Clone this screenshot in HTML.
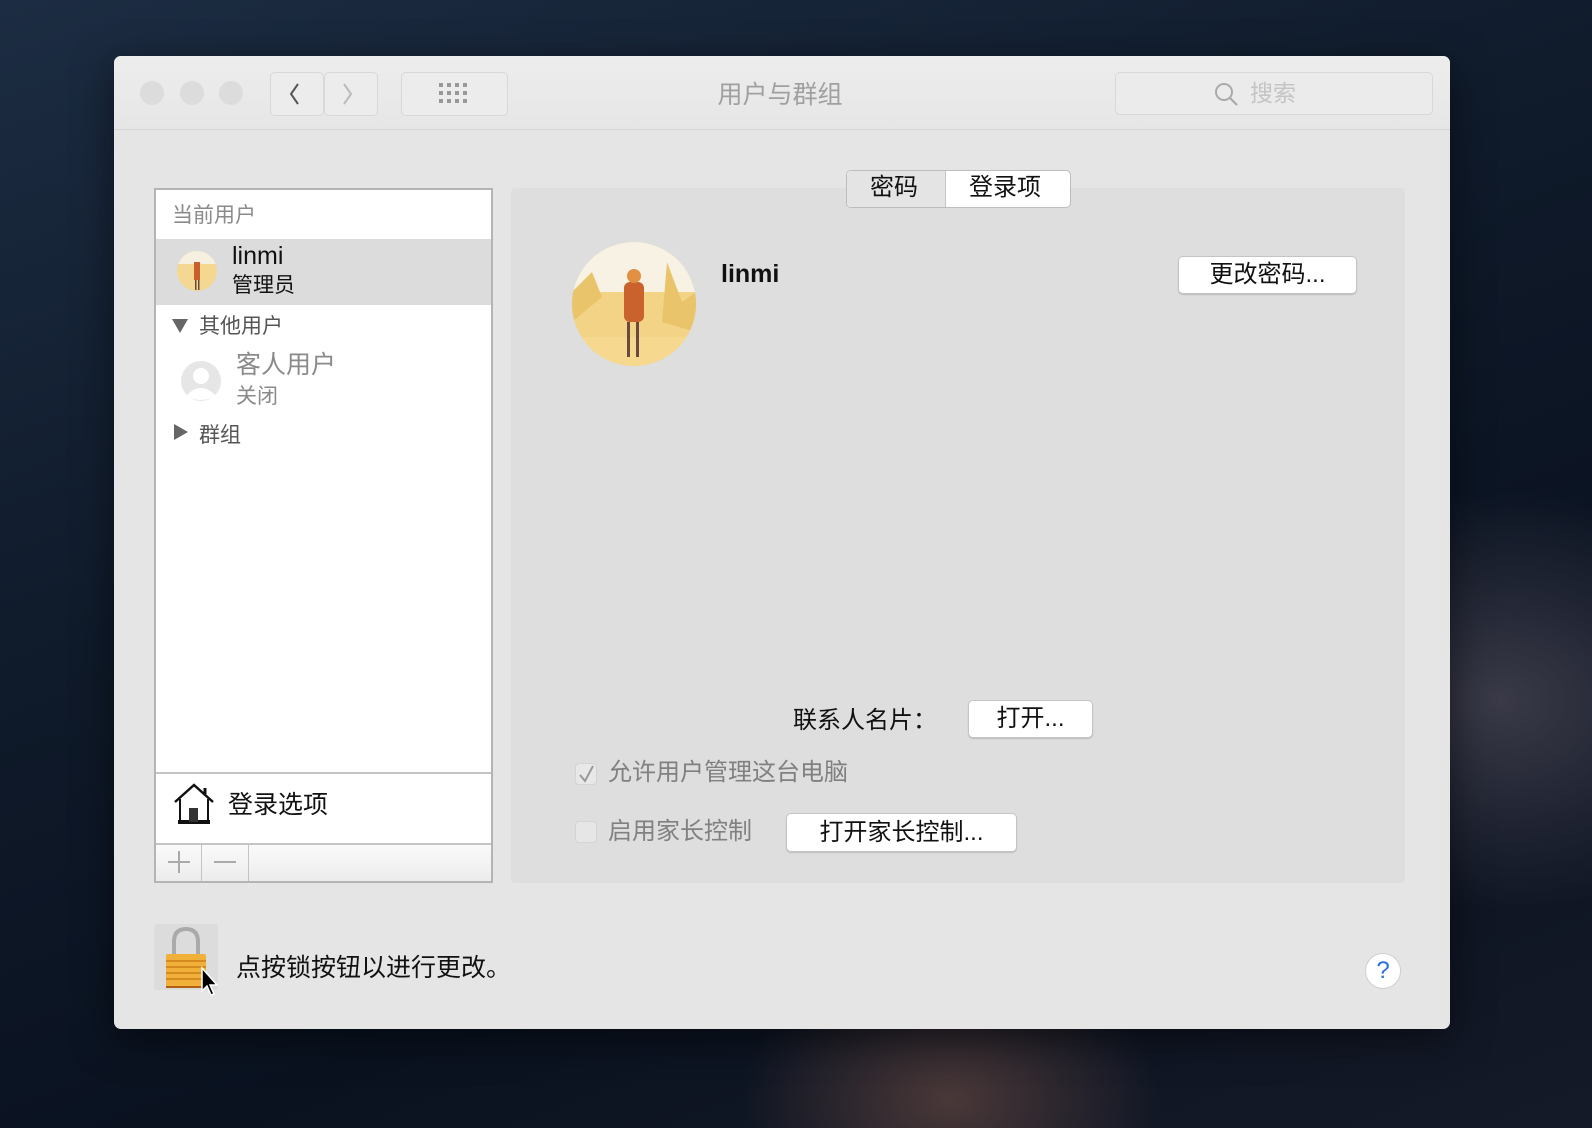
<!DOCTYPE html>
<html><head><meta charset="utf-8"><style>
*{margin:0;padding:0;box-sizing:border-box}
body{width:1592px;height:1128px;overflow:hidden;position:relative;font-family:"Liberation Sans","Noto Sans CJK SC",sans-serif;
background:radial-gradient(ellipse 400px 300px at 1500px 700px,#3a3a48 0%,transparent 70%),radial-gradient(ellipse 300px 200px at 950px 1100px,#4a3838 0%,transparent 70%),linear-gradient(160deg,#1c2c42 0%,#0f1a2a 40%,#0a1220 70%,#151a28 100%)}
.abs{position:absolute}
.win{left:114px;top:56px;width:1336px;height:973px;background:#e5e5e5;border-radius:7px;overflow:hidden;box-shadow:0 10px 40px rgba(0,0,0,.5)}
.tb{left:0;top:0;width:1336px;height:74px;background:linear-gradient(#ededed,#e6e6e6);border-bottom:1px solid #d6d6d6}
.dot{width:24px;height:24px;border-radius:50%;background:#dcdcdc;top:25px}
.btn0{border:1px solid #d8d8d8;border-radius:5px;background:#ececec}
.txt{white-space:nowrap;line-height:1}
.side{left:40px;top:132px;width:339px;height:695px;background:#fff;border:2px solid #b4b4b4}
.pane{left:397px;top:132px;width:894px;height:695px;background:#dedede;border-radius:4px}
.wbtn{background:#fff;border:1px solid #c4c4c4;border-radius:5px;box-shadow:0 1px 1px rgba(0,0,0,.15);text-align:center;color:#111;font-size:24px}
</style></head><body>
<div class="abs win">
 <div class="abs tb">
  <div class="abs dot" style="left:26px"></div><div class="abs dot" style="left:66px"></div><div class="abs dot" style="left:105px"></div>
  <div class="abs btn0" style="left:156px;top:16px;width:54px;height:44px"></div>
  <div class="abs btn0" style="left:210px;top:16px;width:54px;height:44px"></div>
  <svg class="abs" style="left:168px;top:24px" width="90" height="30"><path d="M16 4 L9 14 L16 24" stroke="#555" stroke-width="2" fill="none"/><path d="M62 4 L69 14 L62 24" stroke="#bbb" stroke-width="2" fill="none"/></svg>
  <div class="abs btn0" style="left:287px;top:16px;width:107px;height:44px"></div>
  <svg class="abs" style="left:325px;top:27px" width="32" height="24"><g fill="#999"><rect x="0" y="0" width="4" height="4"/><rect x="8" y="0" width="4" height="4"/><rect x="16" y="0" width="4" height="4"/><rect x="24" y="0" width="4" height="4"/><rect x="0" y="8" width="4" height="4"/><rect x="8" y="8" width="4" height="4"/><rect x="16" y="8" width="4" height="4"/><rect x="24" y="8" width="4" height="4"/><rect x="0" y="16" width="4" height="4"/><rect x="8" y="16" width="4" height="4"/><rect x="16" y="16" width="4" height="4"/><rect x="24" y="16" width="4" height="4"/></g></svg>
  <div class="abs txt" style="left:596px;top:27px;width:140px;text-align:center;font-size:25px;color:#a0a0a0">用户与群组</div>
  <div class="abs btn0" style="left:1001px;top:16px;width:318px;height:43px;background:#ebebeb"></div>
  <svg class="abs" style="left:1099px;top:25px" width="26" height="26"><circle cx="11" cy="11" r="8" stroke="#aaa" stroke-width="2" fill="none"/><path d="M17 17 L24 24" stroke="#aaa" stroke-width="2.2"/></svg>
  <div class="abs txt" style="left:1136px;top:26px;font-size:23px;color:#c4c4c4">搜索</div>
 </div>
 <div class="abs side">
  <div class="abs txt" style="left:16px;top:15px;font-size:21px;color:#8a8a8a">当前用户</div>
  <div class="abs" style="left:0;top:49px;width:335px;height:66px;background:#dcdcdc"></div>
  <svg class="abs" style="left:20px;top:60px" width="42" height="42"><defs><clipPath id="c1"><circle cx="21" cy="21" r="20"/></clipPath></defs><g clip-path="url(#c1)"><rect width="42" height="42" fill="#f4d790"/><rect width="42" height="14" fill="#f6f0e0"/><rect x="18" y="12" width="6" height="18" fill="#c8602c"/><rect x="19" y="30" width="1.5" height="10" fill="#6a4a3a"/><rect x="22" y="30" width="1.5" height="10" fill="#6a4a3a"/></g></svg>
  <div class="abs txt" style="left:76px;top:54px;font-size:25px;color:#111">linmi</div>
  <div class="abs txt" style="left:76px;top:85px;font-size:21px;color:#111">管理员</div>
  <svg class="abs" style="left:15px;top:128px" width="18" height="16"><path d="M1 1 L17 1 L9 15Z" fill="#666"/></svg>
  <div class="abs txt" style="left:43px;top:126px;font-size:21px;color:#555">其他用户</div>
  <svg class="abs" style="left:24px;top:170px" width="42" height="42"><circle cx="21" cy="21" r="20" fill="#e6e6e6"/><circle cx="21" cy="16" r="8" fill="#fff"/><path d="M6 36 Q21 20 36 36 Q21 44 6 36Z" fill="#fff"/></svg>
  <div class="abs txt" style="left:80px;top:163px;font-size:25px;color:#8a8a8a">客人用户</div>
  <div class="abs txt" style="left:80px;top:196px;font-size:21px;color:#8a8a8a">关闭</div>
  <svg class="abs" style="left:17px;top:233px" width="16" height="18"><path d="M1 1 L15 9 L1 17Z" fill="#666"/></svg>
  <div class="abs txt" style="left:43px;top:235px;font-size:21px;color:#555">群组</div>
  <div class="abs" style="left:0;top:582px;width:335px;height:2px;background:#c4c4c4"></div>
  <svg class="abs" style="left:16px;top:592px" width="44" height="44"><path d="M3 20 L22 3 L41 20" stroke="#111" stroke-width="2.5" fill="none"/><path d="M33 6 L33 12" stroke="#111" stroke-width="3"/><path d="M8 17 L8 40 L36 40 L36 17" stroke="#111" stroke-width="2" fill="none"/><rect x="6" y="38" width="32" height="4" fill="#111"/><rect x="17" y="26" width="9" height="14" fill="#333"/></svg>
  <div class="abs txt" style="left:72px;top:603px;font-size:25px;color:#111">登录选项</div>
  <div class="abs" style="left:0;top:653px;width:335px;height:38px;background:linear-gradient(#fafafa,#ececec);border-top:2px solid #c4c4c4"></div>
  <div class="abs" style="left:45px;top:653px;width:1px;height:38px;background:#c4c4c4"></div>
  <div class="abs" style="left:92px;top:653px;width:1px;height:38px;background:#c4c4c4"></div>
  <div class="abs" style="left:22px;top:661px;width:2px;height:22px;background:#aaa"></div>
  <div class="abs" style="left:12px;top:671px;width:22px;height:2px;background:#aaa"></div>
  <div class="abs" style="left:58px;top:671px;width:22px;height:2px;background:#aaa"></div>
 </div>
 <div class="abs pane"></div>
 <div class="abs wbtn txt" style="left:732px;top:114px;width:225px;height:38px;background:#fff;box-shadow:none;border-color:#bdbdbd"></div>
 <div class="abs" style="left:733px;top:115px;width:99px;height:36px;background:#e4e4e4;border-radius:5px 0 0 5px;border-right:1px solid #c4c4c4"></div>
 <div class="abs txt" style="left:756px;top:120px;font-size:24px;color:#111">密码</div>
 <div class="abs txt" style="left:855px;top:120px;font-size:24px;color:#111">登录项</div>
 <svg class="abs" style="left:458px;top:186px" width="124" height="124"><defs><clipPath id="c2"><circle cx="62" cy="62" r="62"/></clipPath></defs><g clip-path="url(#c2)"><rect width="124" height="124" fill="#f3d386"/><rect width="124" height="50" fill="#f7f2e4"/><path d="M0 50 L20 30 L30 55 L0 80Z" fill="#e9c46a"/><path d="M95 20 L110 60 L124 50 L124 90 L90 80Z" fill="#e9c46a"/><rect x="0" y="95" width="124" height="30" fill="#f6d98e"/><rect x="52" y="40" width="20" height="40" rx="6" fill="#c9622d"/><circle cx="62" cy="34" r="7" fill="#e09040"/><rect x="55" y="80" width="3" height="35" fill="#6a4a3a"/><rect x="64" y="80" width="3" height="35" fill="#6a4a3a"/></g></svg>
 <div class="abs txt" style="left:607px;top:206px;font-size:25px;font-weight:bold;color:#111">linmi</div>
 <div class="abs wbtn txt" style="left:1064px;top:200px;width:179px;height:38px;line-height:36px">更改密码...</div>
 <div class="abs txt" style="left:679px;top:653px;font-size:24px;color:#111">联系人名片：</div>
 <div class="abs wbtn txt" style="left:854px;top:644px;width:125px;height:38px;line-height:36px">打开...</div>
 <div class="abs" style="left:461px;top:707px;width:22px;height:22px;border:1px solid #d4d4d4;border-radius:4px;background:#e8e8e8"></div>
 <svg class="abs" style="left:463px;top:707px" width="20" height="22"><path d="M3 12 L8 18 L16 3" stroke="#999" stroke-width="2" fill="none"/></svg>
 <div class="abs txt" style="left:494px;top:705px;font-size:24px;color:#808080">允许用户管理这台电脑</div>
 <div class="abs" style="left:461px;top:765px;width:22px;height:22px;border:1px solid #d4d4d4;border-radius:4px;background:#e6e6e6"></div>
 <div class="abs txt" style="left:494px;top:764px;font-size:24px;color:#808080">启用家长控制</div>
 <div class="abs wbtn txt" style="left:672px;top:757px;width:231px;height:39px;line-height:37px">打开家长控制...</div>
 <div class="abs" style="left:40px;top:868px;width:64px;height:66px;background:#dcdcdc;border-radius:3px"></div>
 <svg class="abs" style="left:48px;top:868px" width="60" height="84"><path d="M12 32 L12 18 Q12 5 24 5 Q36 5 36 18 L36 32" stroke="#aaa" stroke-width="4" fill="none"/><rect x="4" y="30" width="40" height="34" rx="2" fill="#f0b03a"/><g fill="#d58a20"><rect x="4" y="36" width="40" height="2"/><rect x="4" y="42" width="40" height="2"/><rect x="4" y="48" width="40" height="2"/><rect x="4" y="54" width="40" height="2"/></g><rect x="4" y="62" width="40" height="2" fill="#b06010"/><path d="M40 44 L40 67 L45 62 L49 71 L52 70 L48 61 L55 61Z" fill="#000" stroke="#fff" stroke-width="1.5"/></svg>
 <div class="abs txt" style="left:122px;top:900px;font-size:25px;color:#111">点按锁按钮以进行更改。</div>
 <div class="abs" style="left:1251px;top:897px;width:36px;height:36px;border-radius:50%;background:#fff;border:1px solid #cfcfcf;text-align:center;color:#2a6fdc;font-size:24px;line-height:34px">?</div>
</div>
</body></html>
